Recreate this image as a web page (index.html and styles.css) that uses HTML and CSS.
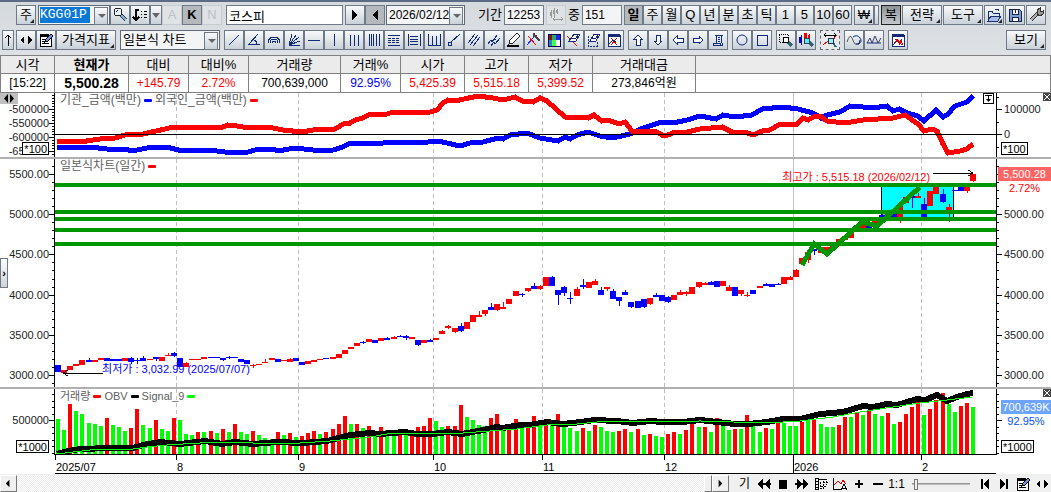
FILE: index.html
```html
<!DOCTYPE html>
<html lang="ko">
<head>
    <meta charset="UTF-8">
    <meta name="viewport" content="width=device-width, initial-scale=1.0">
    <title>코스피 - 일본식 차트</title>
    <link rel="stylesheet" href="styles.css">
</head>
<body>
  <header class="toolbars">
    <div class="toolbar">
      <button class="btn menu lead">주</button>
      <span class="combo code"><input class="code-input" aria-label="종목코드" value="KGG01P"></span>
      <div class="group">
        <button class="btn" aria-label="종목 검색"><svg viewBox="0 0 16 16"><path d="M9 8l5 5" stroke="#335" stroke-width="4"/><path d="M9 8l5 5" stroke="#7fb6c8" stroke-width="2"/><circle cx="6" cy="5" r="4" fill="#e8f4fa" stroke="#222"/><path d="M4 5l2-2" stroke="#222"/></svg></button>
        <button class="btn" aria-label="정렬"><svg viewBox="0 0 16 16"><path d="M7 3H4v10M1 10l3 3 3-3" fill="none" stroke="#000" stroke-width="1.5"/><path d="M9 4h1M12 4h3M9 7h1M12 7h3M9 10h1M12 10h3" stroke="#000"/></svg></button>
        <button class="btn slim" aria-label="정렬 메뉴"><i class="down"></i></button>
        <button class="btn off">A</button>
        <button class="btn pressed strong">K</button>
        <button class="btn off">N</button>
      </div>
      <input class="field name" aria-label="종목명" value="코스피">
      <div class="group">
        <button class="btn" aria-label="다음"><svg viewBox="0 0 16 16"><path d="M5 3l6 5-6 5z"/></svg></button>
        <button class="btn pressed" aria-label="이전"><svg viewBox="0 0 16 16"><path d="M11 3L5 8l6 5z"/></svg></button>
      </div>
      <span class="combo date"><select aria-label="기준일"><option>2026/02/12</option></select></span>
      <label class="cap period" for="period">기간</label>
      <input class="field num" id="period" value="12253">
      <button class="btn off" aria-label="봉 간격"><svg viewBox="0 0 16 16"><path d="M3 3v8M6 1v9M9 2v5" stroke="#999"/><path d="M2 5h2v4H2zM5 3h2v4H5zM8 3h2v3H8z" fill="#999"/><path d="M5 12h10M7 10l-2 2 2 2M13 10l2 2-2 2" fill="none" stroke="#999"/></svg></button>
      <label class="cap" for="bars">중</label>
      <input class="field num" id="bars" value="151">
      <div class="group units">
        <button class="btn pressed strong">일</button>
        <button class="btn">주</button>
        <button class="btn">월</button>
        <button class="btn">Q</button>
        <button class="btn">년</button>
        <button class="btn">분</button>
        <button class="btn">초</button>
        <button class="btn">틱</button>
        <button class="btn">1</button>
        <button class="btn">5</button>
        <button class="btn">10</button>
        <button class="btn">60</button>
      </div>
      <div class="group">
        <button class="btn menu">₩</button>
        <button class="btn sliver" aria-label="더보기"></button>
      </div>
      <div class="group spaced">
        <button class="btn pressed dark">복</button>
        <button class="btn menu wide">전략</button>
        <button class="btn menu wide">도구</button>
        <button class="btn menu" aria-label="열기"><svg viewBox="0 0 16 16"><path d="M2 14V4h4l1 2h6v3" fill="#dfe6f5" stroke="#1a2f66"/><path d="M2 14l3-5h10l-3 5z" fill="#a9bce8" stroke="#1a2f66"/><path d="M9 3q3-2 4 1" fill="none" stroke="#1a2f66"/></svg></button>
        <button class="btn" aria-label="저장"><svg viewBox="0 0 16 16"><path d="M2 2h10l2 2v10H2z" fill="#7d9bd8" stroke="#1a2440"/><path d="M5 2h6v5H5z" fill="#fff" stroke="#1a2440"/><path d="M5 10h6v4H5z" fill="#fff" stroke="#1a2440"/><path d="M8 3v3" stroke="#1a2440"/></svg></button>
        <button class="btn" aria-label="설정"><svg viewBox="0 0 16 16"><path d="M3 13l7-7" stroke="#333" stroke-width="4"/><path d="M3 13l7-7" stroke="#aaa" stroke-width="2"/><path d="M9 7V3l3-2v3l1 1 2-1v3l-3 2z" fill="#999" stroke="#333"/></svg></button>
      </div>
    </div>

    <div class="toolbar second">
      <button class="btn slim" aria-label="위로"><svg viewBox="0 0 10 16"><path d="M5 14V3M2 6l3-3 3 3" fill="none" stroke="#000"/></svg></button>
      <div class="group">
        <button class="btn" aria-label="좌우"><svg viewBox="0 0 16 16"><path d="M6 4v8L2 8zM10 4v8l4-4z"/></svg></button>
        <button class="btn" aria-label="편집"><svg viewBox="0 0 16 16"><path d="M2 4h11v10H2z" fill="#fff" stroke="#000"/><path d="M2 3h9" stroke="#000" stroke-width="2"/><path d="M4 7h5M4 9h4M4 11h7" stroke="#000"/><path d="M7 10l1-3 5-5 2 2-5 5z" fill="#6f94d8" stroke="#000"/></svg></button>
        <button class="btn menu indi">가격지표</button>
      </div>
      <span class="combo kind"><select aria-label="차트 종류"><option>일본식 차트</option></select></span>
      <div class="group draw">
        <button class="btn" aria-label="추세선"><svg viewBox="0 0 16 16"><path d="M3 13L13 3"/></svg></button>
        <button class="btn" aria-label="각도선"><svg viewBox="0 0 16 16"><path d="M12 2L3 12h11M8 8q3 1 3 4"/></svg></button>
        <button class="btn" aria-label="원호"><svg viewBox="0 0 16 16"><path d="M2 11q0-6 6-6t6 6M4 11q0-4 4-4t4 4M6 11q0-2 2-2t2 2"/></svg></button>
        <button class="btn" aria-label="부채꼴"><svg viewBox="0 0 16 16"><path d="M3 13L6 2M3 13L10 3M3 13L13 5M3 13L14 9M3 13h11" /></svg></button>
        <button class="btn" aria-label="수평선"><svg viewBox="0 0 16 16"><path d="M2 8h12"/></svg></button>
        <button class="btn" aria-label="수직선"><svg viewBox="0 0 16 16"><path d="M8 2v12"/></svg></button>
        <button class="btn" aria-label="시간선"><svg viewBox="0 0 16 16"><path d="M4 3v11M8 3v11M12 3v11"/></svg></button>
        <button class="btn" aria-label="주기선"><svg viewBox="0 0 16 16"><path d="M3 2v12M5 2v12M7 2v12M10 2v12M13 2v12"/></svg></button>
        <button class="btn" aria-label="되돌림"><svg viewBox="0 0 16 16"><path d="M2 3h12M2 13h12"/><path d="M2 6h12M2 8h12M2 10h12" stroke-dasharray="3 1"/></svg></button>
        <button class="btn" aria-label="구간선"><svg viewBox="0 0 16 16"><path d="M2 2v12M14 2v12M4 4h8M4 7h8M4 9h8M4 12h8"/></svg></button>
        <button class="btn" aria-label="피치포크"><svg viewBox="0 0 16 16"><path d="M2 2v11h12V2M6 4v9M10 4v9"/></svg></button>
        <button class="btn" aria-label="반직선"><svg viewBox="0 0 16 16"><path d="M2 10h3v3H2zM5 10l9-8"/></svg></button>
        <button class="btn" aria-label="평행선"><svg viewBox="0 0 16 16"><path d="M2 11L9 2M4 13L12 3M7 14L14 5"/></svg></button>
        <button class="btn" aria-label="채널"><svg viewBox="0 0 16 16"><path d="M2 12l3-4 1 2 5-7M5 14l3-4 1 2 5-6M8 7l2 0"/></svg></button>
        <button class="btn" aria-label="연필"><svg viewBox="0 0 16 16"><path d="M3 12l1-4 7-7 3 3-7 7z" fill="#fff" stroke="#222"/><path d="M1 14h12" stroke="#000" stroke-width="2"/></svg></button>
        <button class="btn" aria-label="선 설정"><svg viewBox="0 0 16 16"><path d="M1 13L8 5" stroke="#22f"/><path d="M2 4l8 9" stroke="#f00"/><path d="M8 3l6 6M8 1v3h3" stroke="#444" stroke-width="2"/></svg></button>
        <button class="btn" aria-label="색상"><svg viewBox="0 0 16 16"><path d="M2 2h4v6H2z" fill="#811" stroke="none"/><path d="M6 2h4v6H6z" fill="#2a6" stroke="none"/><path d="M10 2h4v6h-4z" fill="#22e" stroke="none"/><path d="M2 8h4v6H2z" fill="#28c" stroke="none"/><path d="M6 8h4v6H6z" fill="#4f4" stroke="none"/><path d="M10 8h4v6h-4z" fill="#fff" stroke="none"/><path d="M2 2h12v12H2z" stroke="#005"/></svg></button>
        <button class="btn" aria-label="지우개"><svg viewBox="0 0 16 16"><path d="M1 4l10 10" stroke="#f00"/><path d="M3 9l5-7h6l-4 7H3z" fill="#fff"/><path d="M4 6h6l3-4"/></svg></button>
        <button class="btn" aria-label="모두 지우기"><svg viewBox="0 0 16 16"><path d="M2 4v10h9V9" stroke-dasharray="2 1"/><path d="M4 9l4-7h6l-4 7H4z" fill="#fff"/><path d="M5 6h5l3-4"/></svg></button>
        <button class="btn" aria-label="창 닫기"><svg viewBox="0 0 16 16"><path d="M2 3h12v11H2z" fill="#fff"/><path d="M2 3h12" stroke-width="3"/><path d="M5 6l6 7M11 6l-6 7" stroke="#d00"/><path d="M3 12l4-4 3 2" /></svg></button>
      </div>
      <div class="group draw">
        <button class="btn" aria-label="위 화살표"><svg viewBox="0 0 16 16"><path d="M8 3l4 4h-2v6H6V7H4z" fill="#fff"/></svg></button>
        <button class="btn" aria-label="아래 화살표"><svg viewBox="0 0 16 16"><path d="M8 13l4-4h-2V3H6v6H4z" fill="#fff"/></svg></button>
        <button class="btn" aria-label="왼쪽 화살표"><svg viewBox="0 0 16 16"><path d="M3 8l4-4v2h6v4H7v2z" fill="#fff"/></svg></button>
        <button class="btn" aria-label="오른쪽 화살표"><svg viewBox="0 0 16 16"><path d="M13 8L9 4v2H3v4h6v2z" fill="#fff"/></svg></button>
        <button class="btn" aria-label="메모"><svg viewBox="0 0 16 16"><path d="M5 3h8M6 3v8M11 3v8M3 11h7v2H3zM10 13h2v-2M8 5h2M8 7h2M8 9h2"/></svg></button>
      </div>
      <div class="group draw">
        <button class="btn" aria-label="원"><svg class="smooth" viewBox="0 0 16 16"><circle cx="8" cy="8" r="5"/></svg></button>
        <button class="btn" aria-label="사각형"><svg viewBox="0 0 16 16"><path d="M3 3h10v10H3z"/></svg></button>
      </div>
      <div class="group">
        <button class="btn" aria-label="영역 확대"><svg viewBox="0 0 16 16"><path d="M1 2h9v8H1z" fill="none" stroke="#000" stroke-dasharray="1 1"/><path d="M10 10l4 4" stroke="#367" stroke-width="3"/><circle cx="8" cy="8" r="3" fill="#fff" stroke="#000"/></svg></button>
        <button class="btn" aria-label="봉 확대"><svg viewBox="0 0 16 16"><path d="M3 3v10" stroke="#00d"/><path d="M1 5h3v6H1z" fill="#00d"/><path d="M6 1h3v5H6zM11 2h1v5h-2V5" fill="#e00"/><path d="M11 10l4 4" stroke="#367" stroke-width="3"/><circle cx="9" cy="9" r="3" fill="#5ee" stroke="#345"/></svg></button>
      </div>
      <button class="btn dotted" aria-label="자동 맞춤"><svg viewBox="0 0 16 16"><path d="M2 3h12M4 1L2 3l2 2M12 1l2 2-2 2" fill="none" stroke="#000"/><path d="M1 13l5-4 3 1 6-7" fill="none" stroke="#e00"/><path d="M11 11l3 4" stroke="#367" stroke-width="2"/><circle cx="9" cy="9" r="3" fill="#9ee" stroke="#235"/></svg></button>
      <div class="group draw">
        <button class="btn" aria-label="파동"><svg class="smooth" viewBox="0 0 16 16"><path d="M1 10q3-9 5-4t3 6q4 1 5-3" stroke="#555"/><path d="M7 5q4-3 7 1t-2 6M14 8l-1 4h-3"/></svg></button>
        <button class="btn" aria-label="진폭"><svg class="smooth" viewBox="0 0 16 16"><path d="M1 11l3-5 2 5 3-7 3 7 3-5" stroke="#446"/><path d="M1 11h14"/></svg></button>
      </div>
      <div class="group draw">
        <button class="btn" aria-label="차트 삭제"><svg viewBox="0 0 16 16"><path d="M2 3h12v11H2z" fill="#fff"/><path d="M2 3h12" stroke-width="3"/><path d="M4 12l3-5 3 3 2-3M5 7l7 6M9 13l2-4 2 4" stroke="#d00"/><path d="M3 13l4-4"/></svg></button>
      </div>
      <button class="btn menu wide last">보기</button>
    </div>
  </header>

  <table class="quote">
    <colgroup>
      <col class="c54"><col class="c74"><col class="c60"><col class="c60"><col class="c92"><col class="c60">
      <col class="c64"><col class="c64"><col class="c64"><col class="c103"><col>
    </colgroup>
    <thead>
      <tr><th>시각</th><th class="now">현재가</th><th>대비</th><th>대비%</th><th>거래량</th><th>거래%</th><th>시가</th><th>고가</th><th>저가</th><th>거래대금</th><th></th></tr>
    </thead>
    <tbody>
      <tr><td>[15:22]</td><td class="now">5,500.28</td><td class="up">+145.79</td><td class="up">2.72%</td><td>700,639,000</td><td class="down">92.95%</td><td class="up">5,425.39</td><td class="up">5,515.18</td><td class="up">5,399.52</td><td>273,846억원</td><td></td></tr>
    </tbody>
  </table>

  <main class="charts">
    <button class="side-handle" aria-label="패널 열기">›</button>

    <section class="panel flow">
      <svg class="axis" id="flow-left"></svg>
      <div class="plot">
        <svg id="flow-plot" viewBox="0 0 941 64" preserveAspectRatio="none"></svg>
        <p class="legend">기관_금액(백만)<i class="key blue"></i>외국인_금액(백만)<i class="key red"></i></p>
        <button class="pin" aria-label="아래로"><svg viewBox="0 0 9 9"><path d="M1 1h7v1H1zM4 2h1v3h2L4.500 8 2 5h2z"/></svg></button>
      </div>
      <svg class="axis" id="flow-right"></svg>
      <button class="move" aria-label="축 이동"><svg viewBox="0 0 18 11"><path d="M8 1v9L4 5.500zM10 1v9l4-4.500z"/></svg></button>
      <span class="unit unit-left">*100</span>
      <span class="unit unit-right">*100</span>
      <button class="close" aria-label="닫기"><svg viewBox="0 0 8 8"><path d="M1 1l6 6M7 1L1 7" stroke="#fff"/></svg></button>
    </section>

    <section class="panel price">
      <svg class="axis" id="price-left"></svg>
      <div class="plot">
        <svg id="price-plot" viewBox="0 0 941 228" preserveAspectRatio="none"></svg>
        <p class="legend">일본식차트(일간)<i class="key red"></i></p>
        <p class="note high">최고가 : 5,515.18 (2026/02/12)</p>
        <p class="note low">최저가 : 3,032.99 (2025/07/07)</p>
      </div>
      <svg class="axis" id="price-right"></svg>
      <div class="tag"><b class="red-tag">5,500.28</b><span class="up">2.72%</span></div>
    </section>

    <section class="panel volume">
      <svg class="axis" id="volume-left"></svg>
      <div class="plot">
        <svg id="volume-plot" viewBox="0 0 941 66" preserveAspectRatio="none"></svg>
        <p class="legend">거래량<i class="key red"></i>OBV<i class="key black"></i>Signal_9<i class="key lime"></i></p>
      </div>
      <svg class="axis" id="volume-right"></svg>
      <span class="unit unit-left">*1000</span>
      <span class="unit unit-right">*1000</span>
      <button class="close" aria-label="닫기"><svg viewBox="0 0 8 8"><path d="M1 1l6 6M7 1L1 7" stroke="#fff"/></svg></button>
      <div class="tag"><b class="blue-tag">700,639K</b><span class="pct">92.95%</span></div>
    </section>

    <div class="months" id="months"></div>
  </main>

  <footer class="bottom">
    <div class="scroll">
      <button class="sbtn" aria-label="왼쪽으로"><svg viewBox="0 0 16 16"><path d="M9 4v8L5 8z"/></svg></button>
      <span class="thumb"></span>
      <button class="sbtn" aria-label="오른쪽으로"><svg viewBox="0 0 16 16"><path d="M6 4v8l4-4z"/></svg></button>
    </div>
    <div class="tools">
      <button>기</button>
      <button aria-label="빠르게 뒤로"><svg viewBox="0 0 16 16"><path d="M7 3v10L1 8zM14 3v10L8 8z"/><path d="M6 7h9v2H6z"/></svg></button>
      <button aria-label="정지"><svg viewBox="0 0 16 16"><path d="M4 4h8v9H4z"/></svg></button>
      <button aria-label="빠르게 앞으로"><svg viewBox="0 0 16 16"><path d="M9 3v10l6-5zM3 3v10l6-5z"/><path d="M1 7h9v2H1z"/></svg></button>
      <button aria-label="격자"><svg viewBox="0 0 16 16"><path d="M2 2h3v11H2zM2 5h3M2 8h3M2 11h3M5 3h9" fill="none" stroke="#000"/><path d="M7 6v7M10 5v8M8 10h6M13 5v4M11 7l2-2 2 2M9 12l-2 2" fill="none" stroke="#000" stroke-dasharray="2 1"/></svg></button>
      <button aria-label="자동 추세"><svg viewBox="0 0 16 16"><path d="M1 2v11h8" fill="none" stroke="#000"/><path d="M2 9l4-4 3 3 2-4 3 4" fill="none" stroke="#e00"/><path d="M9 14l3-6 3 6M10 12h4" fill="none" stroke="#000"/></svg></button>
      <button aria-label="확대"><svg viewBox="0 0 16 16"><path d="M7 4h2v8H7zM4 7h8v2H4z"/></svg></button>
      <button aria-label="축소"><svg viewBox="0 0 16 16"><path d="M3 7h10v2H3z"/></svg></button>
      <button>1:1</button>
      <input type="range" class="zoom" aria-label="배율" min="0" max="100" value="4">
      <button aria-label="처음"><svg viewBox="0 0 16 16"><path d="M4 3h2v10H4zM12 3v10L6 8z"/></svg></button>
      <button aria-label="마지막"><svg viewBox="0 0 16 16"><path d="M10 3h2v10h-2zM4 3v10l6-5z"/></svg></button>
      <button aria-label="편집"><svg viewBox="0 0 16 16"><path d="M2 4h11v10H2z" fill="#fff" stroke="#000"/><path d="M2 3h9" stroke="#000" stroke-width="2"/><path d="M4 7h5M4 9h4M4 11h7" stroke="#000"/><path d="M7 10l1-3 5-5 2 2-5 5z" fill="#6f94d8" stroke="#000"/></svg></button>
      <button aria-label="좌우"><svg viewBox="0 0 16 16"><path d="M6 4v8L2 8zM10 4v8l4-4z"/><path d="M4 7h2v2H4zM10 7h2v2h-2z"/></svg></button>
    </div>
  </footer>

  <script src="chart.js"></script>
</body>
</html>
```
FILE: styles.css
```css
* {
    box-sizing: border-box;
}

body {
    margin: 0;
    min-height: 100vh;
    display: flex;
    flex-direction: column;
    background: #fff;
    color: #000;
    font-family: "Liberation Sans", "Noto Sans CJK KR", sans-serif;
    font-size: 12px;
    line-height: 16px;
    overflow: hidden;
}

button, input, select {
    font: inherit;
    color: inherit;
    margin: 0;
    padding: 0;
    border-radius: 0;
}

p {
    margin: 0;
}

/* Toolbars */
.toolbars {
    border-top: 2px solid #5b6b86;
    background: linear-gradient(#d5dade, #dde1e5);
    padding: 3px 5px 5px 2px;
}

.toolbar {
    display: flex;
    align-items: center;
    height: 20px;
    gap: 2px;
    white-space: nowrap;
}

.toolbar.second {
    margin-top: 5px;
    gap: 4px;
}

.second > .slim {
    margin-right: -2px;
}

.group {
    display: flex;
    flex: none;
}

.spaced {
    gap: 1px;
}

.btn {
    position: relative;
    flex: none;
    width: 20px;
    height: 20px;
    display: flex;
    align-items: center;
    justify-content: center;
    border: 1px solid #6f7a86;
    background: linear-gradient(#f8fafb, #c9d1d9);
    font-size: 13px;
}

.btn svg {
    width: 16px;
    height: 16px;
    flex: none;
    shape-rendering: crispEdges;
}

.btn .smooth {
    shape-rendering: auto;
}

.draw svg {
    fill: none;
    stroke: #122a78;
}

.lead {
    margin-left: 14px;
}

.slim {
    width: 12px;
}

.btn.slim svg {
    width: 10px;
}

.sliver {
    width: 5px;
}

.wide {
    width: 40px;
}

.indi {
    width: 60px;
}

.last {
    margin-left: auto;
}

.units .btn {
    width: 19px;
}

.pressed {
    background: #b4b9be;
}

.dark {
    border-color: #222;
    background: linear-gradient(#8f9499, #c4c8cc);
}

.strong {
    font-weight: bold;
}

.off {
    color: #bcc1c6;
    background: #dfe3e6;
    border-color: #c6cbd0;
}

.dotted {
    border: 1px dashed #666;
    background: #e8ebee;
}

.menu::after {
    content: "";
    position: absolute;
    right: 1px;
    bottom: 1px;
    border: 2px solid transparent;
    border-right-color: #222;
    border-bottom-color: #222;
}

.down {
    border: 4px solid transparent;
    border-top: 5px solid #666;
    border-bottom: 0;
}

.combo {
    position: relative;
    flex: none;
    height: 20px;
    border: 1px solid #5f6a76;
    background: #f2f4f6;
}

.combo select,
.combo input {
    width: 100%;
    height: 18px;
    border: 0;
    padding: 0 2px;
    background: none;
    appearance: none;
}

.combo::before {
    content: "";
    position: absolute;
    right: 1px;
    top: 1px;
    width: 12px;
    height: 16px;
    border: 1px solid #6f7a86;
    background: linear-gradient(#f8fafb, #c9d1d9);
    pointer-events: none;
}

.combo::after {
    content: "";
    position: absolute;
    right: 3px;
    top: 8px;
    border: 4px solid transparent;
    border-top: 4px solid #666;
    border-bottom: 0;
    pointer-events: none;
}

.code {
    width: 72px;
    margin-right: -2px;
}

.combo .code-input {
    width: 50px;
    margin-left: 1px;
    padding: 0;
    height: 16px;
    background: #0a78d7;
    color: #fff;
    font: 13px/16px "Liberation Mono", monospace;
}

.date {
    width: 79px;
    margin-left: -1px;
}

.kind {
    width: 100px;
}

.kind select {
    font-size: 13px;
}

.field {
    flex: none;
    height: 20px;
    border: 1px solid #6f7a86;
    padding: 0 2px;
    background: #f2f4f6;
}

.name {
    width: 117px;
    margin: 0 0 0 2px;
    background: #fff;
    font-size: 13px;
}

.num {
    width: 40px;
}

.cap {
    font-size: 13px;
}

.period {
    margin-left: 11px;
}

/* Quote table */
.quote {
    width: 100%;
    table-layout: fixed;
    border-collapse: collapse;
}

.quote th,
.quote td {
    padding: 0;
    border: 1px solid #808080;
    text-align: center;
    white-space: nowrap;
    height: 18px;
}

.quote td {
    height: 19px;
}

.quote th {
    background: #ebebeb;
    font-size: 13px;
    font-weight: normal;
}

.quote .now {
    font-weight: bold;
}

.quote td.now {
    font-size: 14px;
}

.c54 { width: 54px; }
.c60 { width: 60px; }
.c64 { width: 64px; }
.c74 { width: 74px; }
.c92 { width: 92px; }
.c103 { width: 103px; }

.up { color: #f00; }
.down { color: #00f; }

/* The arrow of the slim button shares the class name */
i.down { color: inherit; }

/* Chart panels */
.charts {
    position: relative;
    font-size: 11px;
}

.panel {
    position: relative;
    display: grid;
    grid-template-columns: 55px 1fr 55px;
}

.flow,
.price {
    border-bottom: 2px solid #b0b0b0;
}

.flow .plot, .flow .axis { height: 64px; }
.price .plot, .price .axis { height: 228px; }
.volume .plot, .volume .axis { height: 66px; }

.axis {
    display: block;
    width: 55px;
    font-size: 11px;
    fill: #222;
}

.plot {
    position: relative;
}

.plot > svg {
    display: block;
    width: 100%;
    height: 100%;
}

.legend {
    position: absolute;
    left: 5px;
    top: -1px;
    display: flex;
    align-items: center;
    color: #606060;
    font-size: 12px;
    white-space: nowrap;
}

.volume .legend {
    font-size: 11px;
}

.key {
    width: 8px;
    height: 3px;
    margin: 0 3px;
    border-radius: 1px;
}

.red { background: #f00; }
.blue { background: #00f; }
.black { background: #000; }
.lime { background: #0f0; }

.note {
    position: absolute;
    white-space: nowrap;
}

.high {
    right: 7%;
    top: 10px;
    color: #f00;
}

.low {
    left: 5%;
    top: 202px;
    color: #00f;
}

.unit {
    position: absolute;
    bottom: 2px;
    height: 13px;
    padding: 0 1px;
    border: 1px solid #000;
    background: #fff;
    line-height: 12px;
}

.unit-left { right: calc(100% - 49px); }
.unit-right { left: calc(100% - 50px); }

.pin,
.move,
.close,
.side-handle {
    position: absolute;
    border: 0;
    display: flex;
    align-items: center;
    justify-content: center;
}

.pin {
    top: 0;
    right: 2px;
    width: 11px;
    height: 11px;
    border: 1px solid #000;
    background: #fff;
}

.pin svg {
    width: 9px;
    height: 9px;
    flex: none;
}

.move {
    left: 0;
    top: 0;
    width: 18px;
    height: 11px;
    background: #c0c0c0;
}

.close {
    right: 0;
    top: 0;
    width: 8px;
    height: 8px;
    background: #444;
}

.side-handle {
    z-index: 1;
    left: 0;
    top: 165px;
    width: 8px;
    height: 30px;
    border: 1px solid #6f7a86;
    background: linear-gradient(#fff, #ccd3da);
    font-weight: bold;
}

.tag {
    position: absolute;
    right: 0;
    top: 8px;
    width: 53px;
    display: flex;
    flex-direction: column;
    text-align: center;
    line-height: 14px;
}

.tag b {
    color: #fff;
    font-weight: normal;
}

.volume .tag {
    top: 11px;
    width: 50px;
}

.red-tag { background: #ff6464; }
.blue-tag { background: #6ca4ff; }
.pct { color: #0050ff; }

/* Month scale */
.months {
    position: relative;
    height: 20px;
    margin: -1px 55px 0;
    border-top: 1px solid #000;
    border-bottom: 1px solid #000;
}

.months span {
    position: absolute;
    top: 4px;
    padding-left: 1px;
}

.months span::before {
    content: "";
    position: absolute;
    left: 0;
    top: -4px;
    width: 1px;
    height: 5px;
    background: #000;
}

.months .year::before {
    height: 18px;
}

/* Scroll bar and playback tools */
.bottom {
    display: flex;
    height: 19px;
    flex: none;
    padding-top: 1px;
    background: #f0f0f0;
}

.scroll {
    flex: 1;
    display: flex;
    background: repeating-conic-gradient(#fff 0 25%, #ececec 0 50%) 0 0 / 2px 2px;
}

.sbtn,
.thumb {
    border: 1px solid;
    border-color: #fff #777 #777 #fff;
    background: #f0f0f0;
}

.sbtn {
    width: 17px;
    height: 17px;
}

.sbtn svg {
    display: block;
    width: 15px;
    height: 15px;
}

.thumb {
    width: 8px;
    height: 17px;
    margin-left: auto;
}

.tools {
    display: flex;
    align-items: center;
    margin-left: 6px;
}

.tools button {
    width: 19px;
    height: 17px;
    border: 0;
    background: none;
    display: flex;
    align-items: center;
    justify-content: center;
}

.tools svg {
    width: 16px;
    height: 16px;
    flex: none;
    shape-rendering: crispEdges;
}

.zoom {
    width: 58px;
    height: 14px;
    margin: 0 5px 0 6px;
    appearance: none;
    background: linear-gradient(#888, #ccc) 0 50% / 100% 2px no-repeat;
}

.zoom::-webkit-slider-thumb {
    appearance: none;
    width: 4px;
    height: 11px;
    border: 1px solid #777;
    background: #f0f0f0;
}
```
FILE: chart.js
```js
const STEP = 6.1;
const WIDTH = 941;

// x positions of the month lines
const months = [
  [0, '2025/07'], [121, '8'], [243, '9'], [378, '10'],
  [487, '11'], [609, '12'], [738, '2026'], [866, '2']
];

const foreign = '2,48 25,49 45,46 60,45 70,42 88,41 110,36 118,34 127,35 135,34 168,34 173,32 182,33 188,34 218,35 228,37 247,39 258,37 280,36 285,33 290,30 295,30 300,27 308,25 315,21 332,21 338,19 358,20 375,19 382,17 388,10 393,7 400,8 423,3 438,5 448,7 460,4 467,8 478,9 485,5 492,8 510,24 533,25 539,22 547,28 553,27 564,31 570,29 577,38 600,38 607,42 613,42 620,39 632,39 645,36 667,34 677,39 690,39 698,42 707,38 715,37 725,31 742,31 748,25 753,27 760,23 765,23 772,28 790,30 808,27 838,25 850,22 863,31 869,38 877,36 882,38 888,51 893,60 905,58 912,56 918,51';
const inst = '2,54 35,54 52,56 70,56 77,58 92,55 112,54 127,58 135,57 162,58 178,60 193,59 200,57 218,56 223,58 240,55 258,57 278,57 288,54 295,50 328,50 355,49 363,50 383,48 405,53 415,50 428,49 443,45 448,46 455,42 472,40 485,45 503,48 510,44 515,46 522,42 533,39 545,43 558,45 575,41 588,35 607,29 618,30 632,27 645,23 661,26 668,22 680,24 697,22 707,16 728,14 743,16 758,20 766,25 772,22 785,19 795,13 808,14 817,15 832,13 838,18 844,16 852,20 863,23 869,28 881,17 888,24 893,21 900,13 912,9 918,3';
const obv = '2,65 13,62 25,60 55,59 78,59 88,56 105,53 125,55 150,52 167,55 180,53 198,55 222,53 248,54 272,52 295,46 315,44 325,45 350,43 362,45 378,45 393,43 407,45 428,41 442,38 448,39 465,36 475,36 492,33 507,35 518,34 540,31 562,32 578,34 595,32 608,33 628,33 645,31 662,33 680,35 693,35 712,33 728,30 745,30 765,25 788,23 808,17 818,18 832,15 842,16 862,10 870,11 882,6 892,12 902,8 912,5 918,4';
const signal = '2,65 35,61 55,60 78,60 92,58 112,56 145,54 175,53 198,54 245,54 275,52 295,50 315,48 332,45 362,44 408,44 435,42 462,40 492,36 522,35 542,33 572,32 605,33 645,32 678,33 712,34 745,32 778,28 805,23 838,18 865,14 892,11 917,8';

// colour, body top, body bottom, wick top, wick bottom
const candles = `b206-213 r211-214 r207-211 r205-207 r201-206 b201-203-199-203 r201-203 r199-201 b199-202 b200-202
b200-202 r199-202 b199-203-198-205 b201-202-199-205 b199-202-197-202 r200-201 b198-200-198-202 r198-202 r196-197-194-197 b194-197-193-198
b199-208 r204-208-203-208 r200-201 r200-201 r198-200 b198-199 b198-199 b199-201-199-202 b198-199-197-200 b198-199
b200-203 b201-205 r206-207-205-209 r205-206 r203-204-200-204 r199-201 b200-203 r201-202 r200-203-199-203 b199-202
b203-206 r202-205 r201-203 r200-201 b199-200 r198-200 r195-199 r191-195 r188-190 r184-187
b183-184-182-185 r180-183 b181-184 r179-182 b179-181-178-181 r178-180-177-180 b177-178-176-178 b177-179-176-181 r178-180 b181-186-181-187
r181-184 b181-183-180-183 r179-181 r172-175-171-175 r167-169-166-170 r169-173-169-174 b167-172-164-173 r163-170 r156-163 r156-158-152-158
r151-155-151-157 b148-151-144-151 r145-151-145-152 r148-150-143-150 r140-145 r132-137 b135-136-134-138 r129-132-129-133 b127-130-124-130 r127-130-126-131
r118-127 b118-127-117-127 b131-136-131-146 b128-134-127-137 b139-140-133-145 r130-137-128-137 b126-128-120-130 r123-129 r122-126-120-126 b131-136-128-136
r128-130-128-132 b132-140-130-140 b138-142-138-147 b133-136-131-136 b143-148-143-149 b142-149 b140-148-140-149 r139-145-139-146 b136-138-134-138 b136-142
b138-143-137-144 r136-141 r133-136-131-136 r133-135-132-137 r128-135 r123-128-123-129 r124-126-123-126 b123-126-122-126 b122-128 r122-127
r128-132-126-132 b128-137 r131-135-131-137 r136-137-133-138 b131-135 r127-129 b125-127-124-127 b125-128 b125-126-124-126 r118-125
r118-121-117-121 r111-118-110-118 r99-105 r93-101-93-104 b90-92-90-96 r88-94 r88-93 r86-90 r80-85 r77-81
r73-79 r68-71 r64-69 b63-69 r62-66 b56-58-55-59 r55-57 b55-59 r46-59-46-64 r38-44
b37-39-34-49 r37-39-34-39 b45-58-39-58 r32-47 r28-35 b35-43-30-44 r48-51-45-63 b31-32 b27-32 r27-32-27-34
r15-22-15-23`.split(/\s+/);

const volumes = `g35 g24 r50 g43 g40 g31 g30 g28 r36 g29 g27 g23 r26 r45 g29 g26 r34 g25 g23 r36
g34 g20 g19 r22 g22 r23 g21 r25 g22 r30 g22 g20 r23 g19 g16 g15 r22 g19 r21 g17
r18 r21 r23 g20 r22 r25 r30 r38 g30 r30 g26 r28 g22 r27 g24 g22 r22 g20 r20 r27
r28 r36 g33 g27 r28 r28 r49 g37 g34 g29 g28 r36 r40 g29 r28 r35 g28 r32 r38 g29
r29 g29 r40 g28 g26 g23 r26 g23 r29 g27 g23 g22 r23 r25 g22 r25 g19 r20 g18 g17
r20 r22 g20 r24 r31 g27 r27 g22 r36 g29 g24 r25 g25 r39 g28 g22 r26 g25 r31 g31
g28 g28 r32 g34 r35 g30 g27 g27 r29 r37 g37 r41 g39 r44 g40 g38 r41 g30 r32 r40
r47 r53 g39 r45 r54 r61 g50 g42 r48 r51 g47`.split(/\s+/);

const colors = { r: '#f00', b: '#00f', g: '#0f0' };

function rect(x, y, w, h, fill) {
  return `<rect x="${x}" y="${y}" width="${w}" height="${h}" fill="${fill}" shape-rendering="crispEdges"/>`;
}

function line(points, color, width) {
  return `<polyline points="${points}" fill="none" stroke="${color}" stroke-width="${width}" shape-rendering="crispEdges"/>`;
}

function grid(height) {
  return months.slice(1).map(([x, label]) => {
    const dash = label === '2026' ? '' : 'stroke-dasharray="4 3"';
    return `<path d="M${x}.5 0V${height}" stroke="#c0c0c0" ${dash} shape-rendering="crispEdges"/>`;
  }).join('');
}

// Vertical scale: majors is a list of [y, label], minor is the small tick distance
function axis(id, side, height, majors, minor) {
  const left = side === 'left';
  let out = rect(left ? 54 : 0, 0, 1, height, '#000');
  for (let y = majors[0][0] % minor; y < height; y += minor) {
    out += rect(left ? 52 : 1, Math.round(y), 2, 1, '#000');
  }
  majors.forEach(([y, label]) => {
    out += rect(left ? 49 : 1, Math.round(y), 5, 1, '#000');
    out += `<text x="${left ? 49 : 8}" y="${Math.round(y) + 4}" text-anchor="${left ? 'end' : 'start'}">${label}</text>`;
  });
  document.getElementById(id).innerHTML = out;
}

function drawFlow() {
  document.getElementById('flow-plot').innerHTML =
    grid(64) + line(inst, '#00f', 5) + line(foreign, '#f00', 5) + rect(0, 41, WIDTH, 1, '#000');
  axis('flow-left', 'left', 64, [[16, '-500000'], [30, '-550000'], [44, '-600000'], [58, '-650000']], 2.8);
  axis('flow-right', 'right', 64, [[16, '100000'], [41, '0']], 12.5);
}

function drawPrice() {
  let out = grid(228);
  out += rect(826, 27, 73, 31, '#0ff') + rect(826, 27, 1, 31, '#000') + rect(898, 27, 1, 31, '#000');
  candles.forEach((c, i) => {
    const [top, bottom, high, low] = c.slice(1).split('-').map(Number);
    const x = Math.round(i * STEP);
    out += rect(x, top, 6, bottom - top, colors[c[0]]);
    if (high) out += rect(x + 3, high, 1, low - high, colors[c[0]]);
  });
  [26, 53, 60, 71, 85].forEach(y => {
    out += rect(0, y - 2, WIDTH, 4, '#009600');
  });
  out += line('747,106 759,85 772,95 807,63 822,67 865,28', '#009600', 5);
  out += line('878,14 918,14', '#000', 1) + line('913,11 918,14 913,17', '#000', 1);
  out += line('48,214 8,214', '#000', 1) + line('13,211 8,214 13,217', '#000', 1);
  document.getElementById('price-plot').innerHTML = out;

  const marks = ['5500.00', '5000.00', '4500.00', '4000.00', '3500.00', '3000.00'].map((t, i) => [15 + i * 40.2, t]);
  axis('price-left', 'left', 228, marks, 8.04);
  axis('price-right', 'right', 228, marks.slice(1), 8.04);
}

function drawVolume() {
  let out = grid(66);
  volumes.forEach((v, i) => {
    const h = Number(v.slice(1));
    out += rect(Math.round(1 + i * STEP), 65 - h, 4, h, colors[v[0]]);
  });
  out += line(obv, '#000', 6) + line(signal, '#0f0', 1);
  document.getElementById('volume-plot').innerHTML = out;
  axis('volume-left', 'left', 66, [[31, '500000']], 6.5);
  axis('volume-right', 'right', 66, [[31, '']], 6.5);
}

function drawMonths() {
  document.getElementById('months').innerHTML = months.map(([x, label]) =>
    `<span class="${label === '2026' ? 'year' : ''}" style="left:${x / WIDTH * 100}%">${label}</span>`
  ).join('');
}

drawFlow();
drawPrice();
drawVolume();
drawMonths();
```
